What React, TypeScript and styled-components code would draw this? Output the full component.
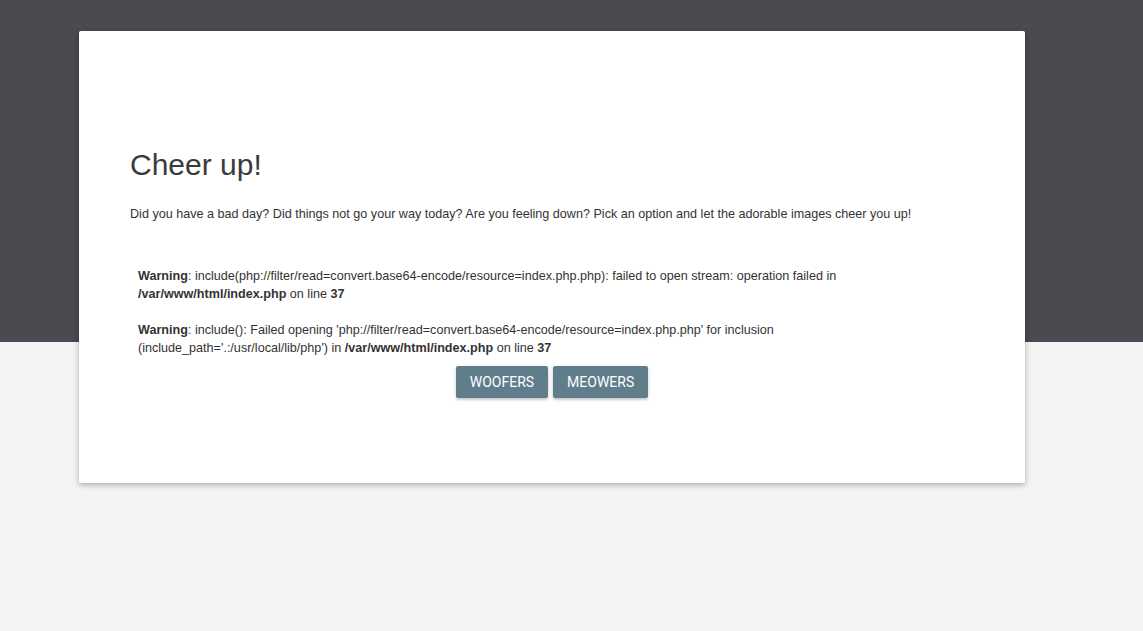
import React from 'react'
import styled, { createGlobalStyle } from 'styled-components'

const GlobalStyle = createGlobalStyle`
  html, body {
    margin: 0;
    padding: 0;
  }
  body {
    background: #f4f4f4;
    font-family: 'Liberation Sans', Arial, sans-serif;
    color: #333;
  }
`

const Page = styled.div`
  min-height: 631px;
  padding: 31px 0 0 79px;
  box-sizing: border-box;
  background: linear-gradient(to bottom, #4a4b51 0, #4a4b51 342px, #f4f4f4 342px);
`

const Card = styled.div`
  width: 946px;
  height: 452px;
  box-sizing: border-box;
  padding: 117px 51px 0;
  background: #fff;
  border-radius: 2px;
  box-shadow: 0 2px 5px rgba(0, 0, 0, 0.2), 0 2px 10px rgba(0, 0, 0, 0.1);
`

const Title = styled.h1`
  margin: 0;
  font-size: 30px;
  font-weight: 400;
  line-height: 34px;
  color: #3b3b3b;
`

const Intro = styled.p`
  margin: 23px 0 0;
  font-size: 12.6px;
  line-height: 18px;
  color: #333;
`

const Warnings = styled.div`
  margin: 44px 8px 0;
`

const Warning = styled.p`
  margin: 0 0 18px;
  font-size: 12.6px;
  line-height: 18px;
  color: #333;

  &:last-child {
    margin-bottom: 0;
  }

  b {
    font-weight: 700;
  }
`

const Actions = styled.div`
  display: flex;
  justify-content: center;
  gap: 5px;
  margin-top: 9px;
`

const Button = styled.button`
  height: 32px;
  padding: 0 14px;
  border: none;
  border-radius: 2px;
  background: #607d8b;
  color: #fff;
  font-family: Roboto, 'Liberation Sans', sans-serif;
  font-size: 14px;
  text-transform: uppercase;
  box-shadow: 0 2px 2px rgba(0, 0, 0, 0.14), 0 1px 5px rgba(0, 0, 0, 0.12);
  cursor: pointer;
`

export default function App() {
  return (
    <>
      <GlobalStyle />
      <Page>
        <Card>
          <Title>Cheer up!</Title>
          <Intro>
            Did you have a bad day? Did things not go your way today? Are you feeling down? Pick an option and let the
            adorable images cheer you up!
          </Intro>
          <Warnings>
            <Warning>
              <b>Warning</b>: include(php://filter/read=convert.base64-encode/resource=index.php.php): failed to open
              stream: operation failed in <b>/var/www/html/index.php</b> on line <b>37</b>
            </Warning>
            <Warning>
              <b>Warning</b>: include(): Failed opening 'php://filter/read=convert.base64-encode/resource=index.php.php'
              for inclusion (include_path='.:/usr/local/lib/php') in <b>/var/www/html/index.php</b> on line <b>37</b>
            </Warning>
          </Warnings>
          <Actions>
            <Button>Woofers</Button>
            <Button>Meowers</Button>
          </Actions>
        </Card>
      </Page>
    </>
  )
}
